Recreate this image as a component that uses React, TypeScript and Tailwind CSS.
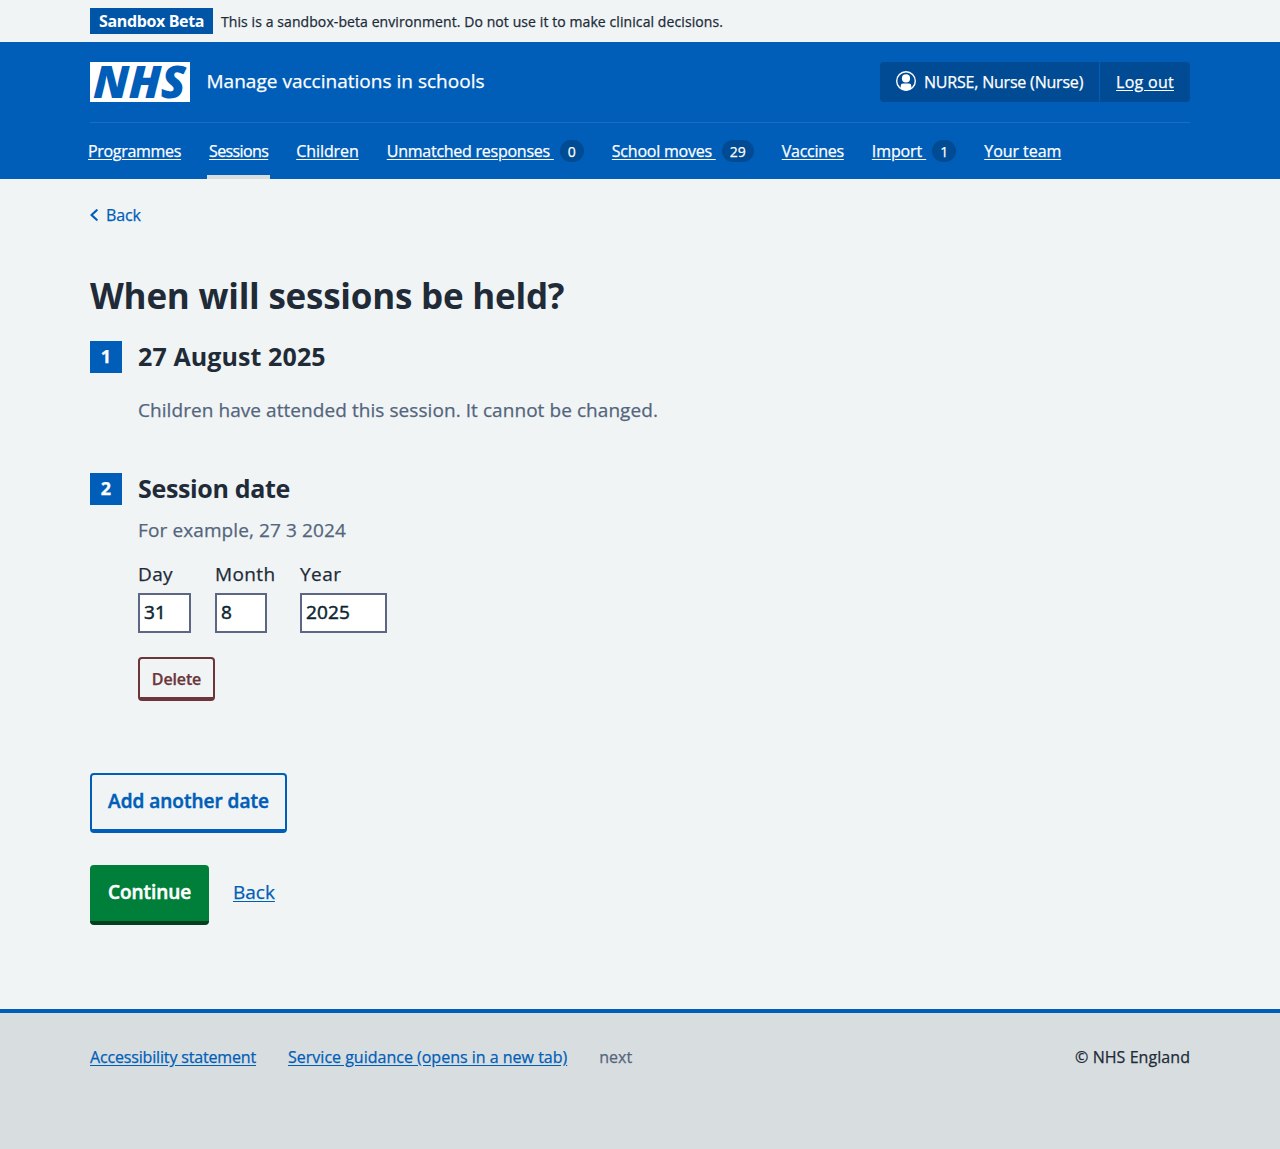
import React from 'react';

type NavItem = { label: string; tracking: string; count?: number; active?: boolean };

const navItems: NavItem[] = [
  { label: 'Programmes', tracking: 'tracking-[-0.31px]' },
  { label: 'Sessions', tracking: 'tracking-[-0.62px]', active: true },
  { label: 'Children', tracking: 'tracking-[-0.07px]' },
  { label: 'Unmatched responses', tracking: 'tracking-[-0.25px]', count: 0 },
  { label: 'School moves', tracking: 'tracking-[-0.23px]', count: 29 },
  { label: 'Vaccines', tracking: 'tracking-[-0.27px]' },
  { label: 'Import', tracking: 'tracking-[-0.1px]', count: 1 },
  { label: 'Your team', tracking: 'tracking-[-0.05px]' },
];

function Logo() {
  return (
    <svg width="100" height="40" viewBox="0 0 100 40" className="overflow-visible" role="img" aria-label="NHS">
      <rect width="100" height="40" fill="#fff" />
      <text
        transform="translate(3 36.2) skewX(-2)"
        fontFamily="Open Sans"
        fontSize="45"
        fontWeight="800"
        fontStyle="italic"
        fill="#005eb8"
        stroke="none"
        className="[-webkit-text-stroke:0]"
        textLength="92"
        lengthAdjust="spacingAndGlyphs"
      >
        NHS
      </text>
    </svg>
  );
}

function AccountIcon() {
  return (
    <svg width="20" height="20" viewBox="0 0 20 20" className="shrink-0" aria-hidden="true">
      <circle cx="10" cy="10" r="9.3" fill="none" stroke="#fff" strokeWidth="1.4" />
      <circle cx="10" cy="7.4" r="4.1" fill="#fff" />
      <path d="M4.7 17.6v-2.6A2.4 2.4 0 0 1 7.1 12.6h5.8a2.4 2.4 0 0 1 2.4 2.4v2.6A9 9 0 0 1 4.7 17.6z" fill="#fff" />
    </svg>
  );
}

function Header() {
  return (
    <header className="h-[137px] bg-[#005eb8] text-white">
      <div className="mx-auto w-[1100px]">
        <div className="flex h-20 items-center">
          <Logo />
          <span className="-mt-0.5 ml-[16.5px] text-[19px] leading-7 tracking-[0.015px]">Manage vaccinations in schools</span>
          <div className="ml-auto flex h-10 overflow-hidden rounded bg-[#004b93] text-[16px] leading-6">
            <div className="flex w-[220px] items-center gap-2 border-r border-[#005eb8] pl-4">
              <span className="-mt-0.5"><AccountIcon /></span>
              <span className="whitespace-nowrap tracking-[-0.2px]">NURSE, Nurse (Nurse)</span>
            </div>
            <a href="#" className="flex w-[90px] items-center pl-4 tracking-[0.29px] underline underline-offset-2">
              Log out
            </a>
          </div>
        </div>
        <nav className="flex h-[57px] gap-6 border-t border-[#1a6dbf]">
          {navItems.map((item, i) => (
            <a
              key={item.label}
              href="#"
              className={`flex items-center whitespace-pre px-0.5 text-[16px] leading-6 ${i === 0 ? '-ml-1' : ''} ${
                item.active ? 'border-b-4 border-[#d8dde0] pt-1' : ''
              }`}
            >
              <span className={`underline underline-offset-2 ${item.tracking}`}>
                {item.label + (item.count !== undefined ? ' ' : '')}
              </span>
              {item.count !== undefined && (
                <span className="ml-1.5 flex h-[22px] min-w-6 items-center justify-center rounded-full bg-[#004b93] px-2 pt-0.5 text-[14px] leading-none">
                  {item.count}
                </span>
              )}
            </a>
          ))}
        </nav>
      </div>
    </header>
  );
}

function StepHeading({ step, children, tracking }: { step: number; children: string; tracking: string }) {
  return (
    <div className="flex h-8 items-center gap-4">
      <span className="flex size-8 items-center justify-center bg-[#005eb8] pb-0.5 text-[18px] font-bold leading-none text-white">
        {step}
      </span>
      <h2 className={`-mt-0.5 text-[25px] font-bold leading-8 [-webkit-text-stroke:0] ${tracking}`}>{children}</h2>
    </div>
  );
}

function DateField({ label, value, width, tracking }: { label: string; value: string; width: string; tracking: string }) {
  return (
    <label className="block text-[19px] leading-7">
      <span className={`block ${tracking}`}>{label}</span>
      <input
        defaultValue={value}
        className={`mt-[5px] block h-10 border-2 border-[#5d6785] bg-white px-1 pb-0.5 tracking-[0.13px] text-[#0b2530] outline-none [-webkit-text-stroke:0.5px] ${width}`}
      />
    </label>
  );
}

export default function App() {
  return (
    <div className="flex min-h-[1149px] flex-col bg-[#f0f4f5] font-['Open_Sans',sans-serif] text-[#212b38] [-webkit-text-stroke:0.25px]">
      <div className="h-[42px]">
        <div className="mx-auto flex h-full w-[1100px] items-center gap-2">
          <span className="flex h-[26px] w-[123px] items-center justify-center bg-[#0055a6] text-[16px] font-bold leading-none tracking-[-0.36px] text-white [-webkit-text-stroke:0]">
            Sandbox Beta
          </span>
          <span className="pt-0.5 text-[14px] leading-6 tracking-[0.087px]">
            This is a sandbox-beta environment. Do not use it to make clinical decisions.
          </span>
        </div>
      </div>
      <Header />
      <main className="mx-auto w-[1100px] grow pt-6">
        <a href="#" className="flex h-6 items-center gap-2 text-[16px] leading-6 text-[#005eb8]">
          <svg width="8" height="12" viewBox="0 0 8 12" fill="none" stroke="#005eb8" strokeWidth="2.2" strokeLinecap="round" strokeLinejoin="round" aria-hidden="true">
            <path d="M6.7 1.2 1.5 6l5.2 4.8" />
          </svg>
          <span className="tracking-[-0.15px]">Back</span>
        </a>
        <h1 className="mt-[45px] text-[35px] font-bold leading-[48px] tracking-[-0.23px] [-webkit-text-stroke:0]">When will sessions be held?</h1>
        <section className="mt-[21px]">
          <StepHeading step={1} tracking="tracking-[0.1px]">27 August 2025</StepHeading>
          <p className="ml-12 mt-[23px] text-[19px] leading-7 tracking-[0.065px] text-[#54657c]">
            Children have attended this session. It cannot be changed.
          </p>
        </section>
        <section className="mt-[49px]">
          <StepHeading step={2} tracking="tracking-[-0.33px]">Session date</StepHeading>
          <div className="ml-12">
            <p className="mt-[11px] text-[19px] leading-7 tracking-[0.11px] text-[#54657c]">For example, 27 3 2024</p>
            <div className="mt-4 flex">
              <div className="w-[77px]">
                <DateField label="Day" value="31" width="w-[53px]" tracking="tracking-[0.37px]" />
              </div>
              <div className="w-[85px]">
                <DateField label="Month" value="8" width="w-[52px]" tracking="tracking-[0.4px]" />
              </div>
              <DateField label="Year" value="2025" width="w-[87px]" tracking="tracking-[0.5px]" />
            </div>
            <button className="mt-6 flex h-11 w-[77px] items-center justify-center rounded border-2 border-b-4 border-[#6b3539] pt-0.5 text-[16px] font-semibold leading-6 tracking-[-0.15px] text-[#6b3539]">
              Delete
            </button>
          </div>
        </section>
        <button className="mt-[72px] flex h-[60px] w-[197px] items-center justify-center rounded border-2 border-b-4 border-[#005eb8] pb-0.5 text-[19px] font-semibold leading-7 text-[#005eb8] [-webkit-text-stroke:0.5px]">
          Add another date
        </button>
        <div className="mt-8 flex items-center gap-6">
          <button className="flex h-[60px] w-[119px] items-center justify-center rounded border-b-4 border-[#00401e] bg-[#007f3b] pb-0.5 text-[19px] font-semibold leading-7 tracking-[-0.07px] text-white [-webkit-text-stroke:0.5px]">
            Continue
          </button>
          <a href="#" className="-mt-1.5 text-[19px] leading-7 text-[#005eb8] underline underline-offset-2">
            Back
          </a>
        </div>
      </main>
      <footer className="h-[140px] border-t-4 border-[#005eb8] bg-[#d8dde0] pt-8 text-[16px] leading-6">
        <div className="mx-auto flex w-[1100px] gap-8">
          <a href="#" className="tracking-[-0.16px] text-[#005eb8] underline underline-offset-2">Accessibility statement</a>
          <a href="#" className="text-[#005eb8] underline underline-offset-2">Service guidance (opens in a new tab)</a>
          <span className="text-[#54657c]">next</span>
          <span className="ml-auto tracking-[0.06px]">© NHS England</span>
        </div>
      </footer>
    </div>
  );
}
